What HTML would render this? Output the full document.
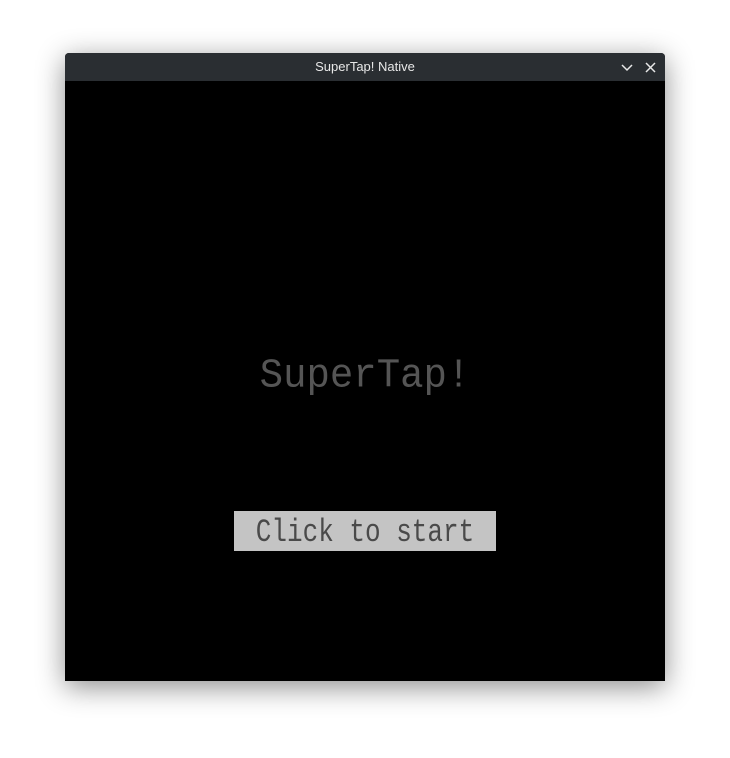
<!DOCTYPE html>
<html><head><style>
body{margin:0;width:730px;height:758px;background:#fff;position:relative;overflow:hidden;font-family:"Liberation Sans",sans-serif}
.win{position:absolute;left:65px;top:53px;width:600px;height:628px;background:#000;box-shadow:0 6px 28px rgba(0,0,0,.45);border-radius:4px 4px 0 0;overflow:hidden}
.tb{height:28px;background:#2a2e32;color:#e8e8e8;font-size:13px;text-align:center;line-height:28px}
.t{position:absolute;left:0;width:600px;text-align:center;color:#555;font-family:"Liberation Mono",monospace;white-space:nowrap}
.btn{position:absolute;left:169px;top:458px;width:262px;height:40px;background:#c4c4c4}
</style></head><body>
<div class="win">
<div class="tb">SuperTap! Native</div>
<svg style="position:absolute;left:555px;top:8px" width="40" height="14"><path d="M2 4l5 5 5-5" stroke="#e8e8e8" stroke-width="1.5" fill="none"/><path d="M26 2l9 9M35 2l-9 9" stroke="#e8e8e8" stroke-width="1.5"/></svg>
<div class="t" style="top:301px;font-size:39px;letter-spacing:0px;transform:scaleY(1.05)">SuperTap!</div>
<div class="btn"></div>
<div class="t" style="top:459px;font-size:26px;line-height:40px;color:#4a4a4a;transform:scaleY(1.25)">Click to start</div>
</div>
</body></html>
